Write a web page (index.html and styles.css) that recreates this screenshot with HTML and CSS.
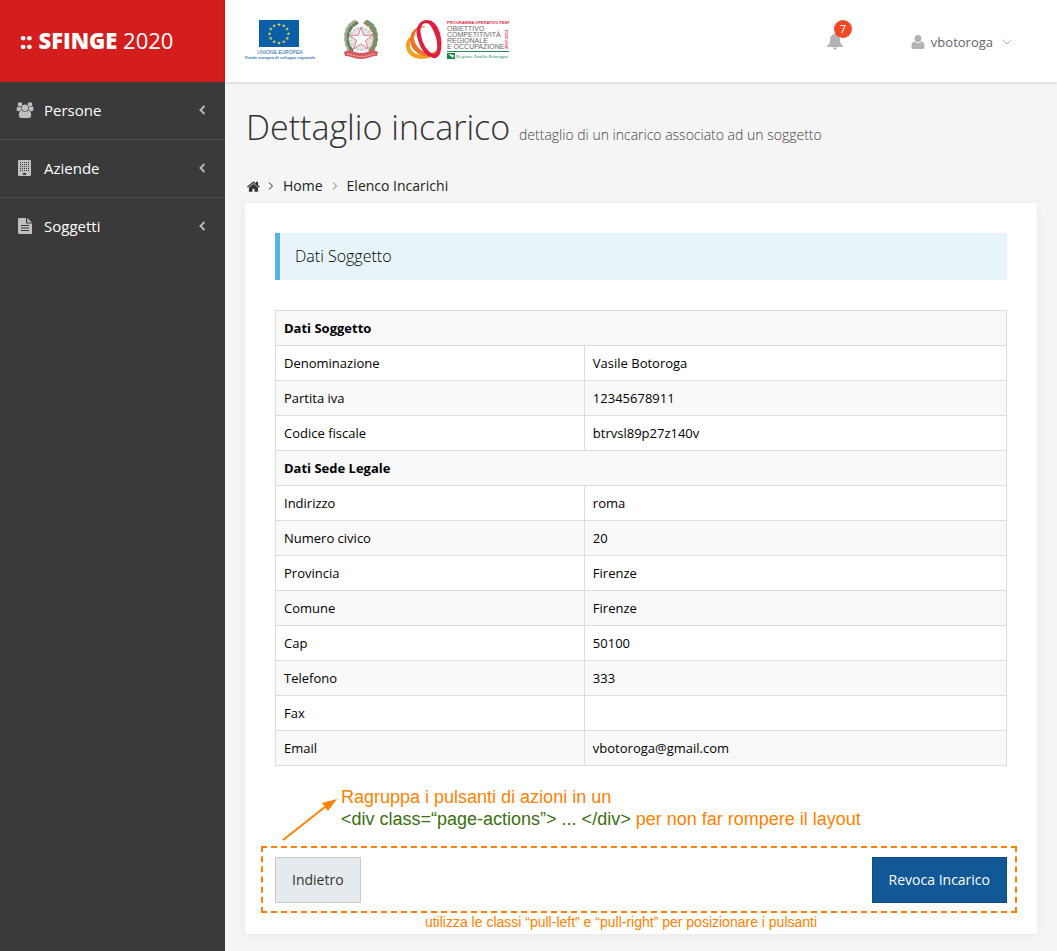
FILE: index.html
```html
<!DOCTYPE html>
<html lang="it">
<head>
<meta charset="utf-8">
<meta name="viewport" content="width=device-width, initial-scale=1">
<title>Sfinge 2020 - Dettaglio incarico</title>
<link rel="stylesheet" href="styles.css">
</head>
<body>
<div class="layout">
  <aside class="sidebar">
    <a class="brand" href="#"><b>:: SFINGE</b> 2020</a>
    <nav class="menu">
      <a class="menu-item" href="#">
        <svg class="menu-icon" viewBox="0 0 2048 1792"><path d="M657 896q-162 5-265 128h-134q-82 0-138-40.500t-56-118.500q0-353 124-353 6 0 43.500 21t97.500 42.500 119 21.500q67 0 133-23-5 37-5 66 0 159 90 287zm1071 637q0 120-73 189.500t-194 69.500h-874q-121 0-194-69.500t-73-189.500q0-53 3.500-103.500t14-109 26.500-108.500 43-97.500 62-81 85.500-53.500 111.500-20q10 0 43 21.500t73 48 107 48 135 21.500 135-21.500 107-48 73-48 43-21.500q61 0 111.500 20t85.500 53.500 62 81 43 97.500 26.500 108.500 14 109 3.500 103.500zm-1024-1277q0 106-75 181t-181 75-181-75-75-181 75-181 181-75 181 75 75 181zm704 384q0 159-112.500 271.500t-271.500 112.500-271.500-112.500-112.500-271.500 112.500-271.500 271.500-112.500 271.500 112.500 112.500 271.500zm576 225q0 78-56 118.500t-138 40.500h-134q-103-123-265-128 90-128 90-287 0-29-5-66 66 23 133 23 59 0 119-21.500t97.500-42.500 43.500-21q124 0 124 353zm-128-609q0 106-75 181t-181 75-181-75-75-181 75-181 181-75 181 75 75 181z"/></svg>
        <span class="menu-label">Persone</span>
        <svg class="menu-arrow" viewBox="0 0 8 12"><path d="M6.500 2 2.500 6l4 4"/></svg>
      </a>
      <a class="menu-item" href="#">
        <svg class="menu-icon" viewBox="0 0 18 18"><path fill-rule="evenodd" d="M3 1h11q1 0 1 1v14q0 1-1 1H3q-1 0-1-1V2q0-1 1-1zm4 13v2h3v-2z"/><path class="windows" d="M4.500 3v9.500M6.500 3v9.500M8.500 3v9.500M10.500 3v9.500M12.500 3v9.500"/></svg>
        <span class="menu-label">Aziende</span>
        <svg class="menu-arrow" viewBox="0 0 8 12"><path d="M6.500 2 2.500 6l4 4"/></svg>
      </a>
      <a class="menu-item" href="#">
        <svg class="menu-icon" viewBox="0 0 18 18"><path d="M3 1h7v5.500h6V16q0 1-1 1H3q-1 0-1-1V2q0-1 1-1z"/><path d="M11.200 1 16 5.500h-4.800z"/><path class="lines" d="M5 8.500h8M5 11h8M5 13.500h8"/></svg>
        <span class="menu-label">Soggetti</span>
        <svg class="menu-arrow" viewBox="0 0 8 12"><path d="M6.500 2 2.500 6l4 4"/></svg>
      </a>
    </nav>
  </aside>

  <div class="page">
    <header class="topbar">
      <div class="logos">
        <svg class="logo-eu" viewBox="0 0 72 42" role="img" aria-label="Unione Europea">
          <defs><path id="star" d="M0-1.800.5-.5 1.800-.5.800.4 1.100 1.600 0 .8-1.100 1.600-.8.400-1.800-.5-.5-.5z"/></defs>
          <rect x="14" y="0" width="40" height="27" fill="#0b5fa9"/>
          <g fill="#f5e13a">
            <use href="#star" x="34" y="4.500"/><use href="#star" x="38.800" y="5.700"/><use href="#star" x="42.200" y="9"/><use href="#star" x="43.500" y="13.700"/><use href="#star" x="42.200" y="18.300"/><use href="#star" x="38.800" y="21.700"/><use href="#star" x="34" y="23"/><use href="#star" x="29.200" y="21.700"/><use href="#star" x="25.800" y="18.300"/><use href="#star" x="24.500" y="13.700"/><use href="#star" x="25.800" y="9"/><use href="#star" x="29.200" y="5.700"/>
          </g>
          <text x="35" y="34" text-anchor="middle" class="eu-name">UNIONE EUROPEA</text>
          <text x="35" y="39" text-anchor="middle" class="eu-fund">Fondo europeo di sviluppo regionale</text>
        </svg>
        <svg class="logo-italy" viewBox="0 0 36 40" role="img" aria-label="Repubblica Italiana">
          <g fill="none" stroke-linecap="round">
            <path d="M12 2Q3 6 3 18q0 8 5 13" stroke="#a5ab8e" stroke-width="4" stroke-dasharray="2 3"/>
            <path d="M14 3Q5 8 5 18q0 8 4 12" stroke="#5d8061" stroke-width="3" stroke-dasharray="4 3"/>
            <path d="M24 2q9 4 9 16 0 8-5 13" stroke="#6d9470" stroke-width="4" stroke-dasharray="2 3"/>
            <path d="M22 3q9 5 9 15 0 8-4 12" stroke="#96885d" stroke-width="3" stroke-dasharray="4 3"/>
          </g>
          <circle cx="18" cy="19" r="12" fill="#e4e4e4"/>
          <circle cx="18" cy="19" r="11" fill="none" stroke="#c4c4c4" stroke-width="3" stroke-dasharray="1 3"/>
          <path d="m18 7 2.700 8.300h8.800l-7 5.200 2.700 8.500-7.200-5.200-7.200 5.200 2.700-8.500-7-5.200h8.800z" fill="#fff" stroke="#e07d84" stroke-width="1"/>
          <path d="M1 32q4-3 8-1 9 4 18 0 4-2 8 1l-1 4q-4 0-6 1-10 4-20 0-2-1-6-1z" fill="#d65a62"/>
          <path d="M4 34q3 0 5 1 9 3 18 0 2-1 5-1" fill="none" stroke="#f4c6c8" stroke-width="1" stroke-dasharray="2 1"/>
        </svg>
        <svg class="logo-por" viewBox="0 0 104 42" role="img" aria-label="Programma operativo FESR">
          <g fill-rule="evenodd">
            <path fill="#f2a024" d="M12 14Q0 17 1 27q2 11 15 12 13 0 14-7-5 4-12 3Q5 34 5 25q0-7 7-11z"/>
            <path fill="#ec7426" d="M17 6Q6 8 5 19q0 10 9 15 9 5 17 1 5-4 3-10-2 8-9 8-8 0-13-7-6-9 0-16 3-3 10-3z"/>
            <path fill="#df1e40" d="M22 0q9 0 13 13 3 12 0 21-3 5-7 4-10-3-14-15Q9 10 14 4q3-4 8-4zm-2 3q-6 2-4 12 2 12 10 18 5 3 6-3 1-9-3-18-4-10-9-9z"/>
          </g>
          <text x="42" y="4" class="por-title">PROGRAMMA OPERATIVO FESR</text>
          <g class="por-text"><text x="42" y="11">OBIETTIVO</text><text x="42" y="17">COMPETITIVITÀ</text><text x="42" y="23">REGIONALE</text><text x="42" y="29">E OCCUPAZIONE</text></g>
          <text class="por-title" transform="translate(103 29) rotate(-90)">2007-2013</text>
          <rect x="42" y="31" width="62" height="1" fill="#238b59"/>
          <rect x="42" y="33" width="8" height="6" fill="#14834c"/><path d="m43 34 6 1-1 3z" fill="#fff"/>
          <text x="51" y="38" class="por-region">Regione Emilia Romagna</text>
        </svg>
      </div>
      <button class="bell" type="button" aria-label="Notifiche">
        <svg viewBox="0 0 18 18"><path d="M9 1q1.200 0 1.200 1.300Q14 3.300 14 8q0 4 3 6v1H1v-1q3-2 3-6 0-4.700 3.800-5.700Q7.800 1 9 1zM7 15.500h4Q11 17.500 9 17.500T7 15.500z"/></svg>
        <span class="badge">7</span>
      </button>
      <button class="user" type="button">
        <svg class="user-icon" viewBox="0 0 14 14"><circle cx="7" cy="3.500" r="3.500"/><path d="M3.500 6.500Q7 9.500 10.500 6.500 13.500 7 13.500 11.500 13.500 14 11.500 14h-9Q.5 14 .5 11.500.5 7 3.500 6.500z"/></svg>
        <span>vbotoroga</span>
        <svg class="user-arrow" viewBox="0 0 10 6"><path d="m.7.7 4.300 4.300L9.300.7"/></svg>
      </button>
    </header>

    <main class="content">
      <h1 class="title">Dettaglio incarico <small>dettaglio di un incarico associato ad un soggetto</small></h1>
      <nav class="breadcrumb">
        <svg class="home-icon" viewBox="80 200 1640 1340"><path d="M1472 992v480q0 26-19 45t-45 19h-384v-384h-256v384h-384q-26 0-45-19t-19-45v-480q0-1 .5-3t.5-3l575-474 575 474q1 2 1 6zm223-69l-62 74q-8 9-21 11h-3q-13 0-21-7l-692-577-692 577q-12 8-24 7-13-2-21-11l-62-74q-8-10-7-23.500t11-21.500l719-599q32-26 76-26t76 26l244 204v-195q0-14 9-23t23-9h192q14 0 23 9t9 23v408l219 182q10 8 11 21.500t-7 23.500z"/></svg>
        <svg class="crumb-arrow" viewBox="0 0 6 8"><path d="m1 .5 3.500 3.500L1 7.500"/></svg>
        <a href="#">Home</a>
        <svg class="crumb-arrow light" viewBox="0 0 6 8"><path d="m1 .5 3.500 3.500L1 7.500"/></svg>
        <a href="#">Elenco Incarichi</a>
      </nav>

      <section class="card">
        <h2 class="note">Dati Soggetto</h2>
        <table class="details">
          <colgroup><col class="col-label"><col></colgroup>
          <tbody>
            <tr><th colspan="2">Dati Soggetto</th></tr>
            <tr><td>Denominazione</td><td>Vasile Botoroga</td></tr>
            <tr><td>Partita iva</td><td>12345678911</td></tr>
            <tr><td>Codice fiscale</td><td>btrvsl89p27z140v</td></tr>
            <tr><th colspan="2">Dati Sede Legale</th></tr>
            <tr><td>Indirizzo</td><td>roma</td></tr>
            <tr><td>Numero civico</td><td>20</td></tr>
            <tr><td>Provincia</td><td>Firenze</td></tr>
            <tr><td>Comune</td><td>Firenze</td></tr>
            <tr><td>Cap</td><td>50100</td></tr>
            <tr><td>Telefono</td><td>333</td></tr>
            <tr><td>Fax</td><td></td></tr>
            <tr><td>Email</td><td>vbotoroga@gmail.com</td></tr>
          </tbody>
        </table>
        <div class="hint">
          <svg class="hint-arrow" viewBox="0 0 58 46"><path d="M1 44 43 11" fill="none" stroke="#ff7f00" stroke-width="2"/><path d="M55 3 46 15 43 11 40 7z" fill="#ff7f00"/></svg>
          <p>Ragruppa i pulsanti di azioni in un<br><code>&lt;div class=“page-actions”&gt; ... &lt;/div&gt;</code> per non far rompere il layout</p>
        </div>
        <div class="page-actions">
          <button class="btn btn-default" type="button">Indietro</button>
          <button class="btn btn-primary" type="button">Revoca Incarico</button>
        </div>
        <p class="hint-small">utilizza le classi “pull-left” e “pull-right” per posizionare i pulsanti</p>
      </section>
    </main>
  </div>
</div>
</body>
</html>
```

FILE: styles.css
```css
* { box-sizing: border-box; }

body {
  margin: 0;
  background: #f5f5f5;
  color: #000;
  font: 13px/20px "Open Sans", sans-serif;
}

a { color: inherit; text-decoration: none; }
svg { display: block; flex: none; }
button { font: inherit; cursor: pointer; }

.layout { display: flex; min-height: 100vh; }

/* Sidebar */
.sidebar { flex: 0 0 225px; background: #3a3a3a; color: #fff; }
.brand {
  display: block;
  height: 82px;
  padding: 0 20px;
  background: #d41e1e;
  font-size: 22px;
  line-height: 80px;
}
.brand b { font-weight: 800; }
.menu-item {
  display: flex;
  align-items: center;
  height: 58px;
  padding: 0 19px 2px 16px;
  border-bottom: 1px solid #4d4d4d;
  font-size: 15px;
}
.menu-item:last-child { border-bottom: 0; }
.menu-icon { width: 18px; height: 18px; margin-right: 10px; fill: #bfbfbf; }
.menu-icon .windows { stroke: #3a3a3a; stroke-width: 1; stroke-dasharray: 1 1; }
.menu-icon .lines { stroke: #3a3a3a; stroke-width: 1; }
.menu-label { flex: 1; }
.menu-arrow { width: 8px; height: 12px; fill: none; stroke: #b5b5b5; stroke-width: 2; }

/* Top bar */
.page { flex: 1; min-width: 0; }
.topbar {
  display: flex;
  align-items: center;
  height: 82px;
  padding: 0 45px 0 20px;
  background: #fff;
  box-shadow: 0 1px 3px rgba(0, 0, 0, .15);
}
.logos { display: flex; flex: 1; gap: 26px; }
.logo-eu { width: 72px; height: 42px; }
.logo-italy { width: 36px; height: 40px; }
.logo-por { width: 104px; height: 42px; }
.logos text { font-family: "Liberation Sans", sans-serif; }
.logos .eu-name { font-size: 5px; fill: #1765a9; }
.logos .eu-fund { font-size: 4px; font-weight: bold; fill: #3b7db8; }
.logos .por-title { font-size: 4px; font-weight: bold; fill: #e0284a; }
.logos .por-text { font-size: 7px; fill: #666; }
.logos .por-region { font: 5px "Liberation Serif", serif; fill: #238b59; }

.bell, .user { padding: 0; border: 0; background: none; }
.bell { position: relative; margin-right: 67px; }
.bell svg { width: 18px; height: 18px; fill: #b3b3b3; }
.badge {
  position: absolute;
  top: -12px;
  right: -8px;
  width: 18px;
  height: 18px;
  border-radius: 50%;
  background: #f04a25;
  color: #fff;
  font-size: 11px;
  line-height: 18px;
}
.user { display: flex; align-items: center; padding-top: 2px; color: #666; }
.user-icon { width: 14px; height: 14px; margin-right: 6px; fill: #b3b3b3; }
.user-arrow { width: 10px; height: 6px; margin-left: 9px; fill: none; stroke: #b3b3b3; }

/* Content */
.content { padding: 20px 20px 17px; }
.title {
  margin: 0;
  padding-left: 1px;
  color: #333;
  font-size: 34px;
  font-weight: 300;
  line-height: 50px;
}
.title small { color: #444; font-size: 14px; }
.breadcrumb {
  display: flex;
  align-items: center;
  padding: 24px 2px 7px;
  margin-top: -8px;
  color: #222;
  font-size: 14px;
}
.home-icon { width: 13px; height: 11px; margin-right: 8px; fill: #333; }
.crumb-arrow { width: 6px; height: 8px; margin-right: 9px; fill: none; stroke: #222; stroke-width: 1; }
.crumb-arrow.light { margin-left: 9px; stroke: #777; }

.card {
  padding: 30px 30px 3px;
  border-radius: 3px;
  background: #fff;
  box-shadow: 0 1px 10px rgba(0, 0, 0, .06);
}
.note {
  margin: 0 0 30px;
  padding: 13px 15px 14px;
  border-left: 5px solid #57b5e3;
  background: #e7f5fb;
  font-size: 16px;
  font-weight: 300;
  line-height: 20px;
}
.details { width: 100%; border-collapse: collapse; table-layout: fixed; }
.col-label { width: 42.25%; }
.details th, .details td {
  height: 35px;
  padding: 7px 8px;
  border: 1px solid #ddd;
  text-align: left;
}
.details tr:nth-child(odd) { background: #f9f9f9; }
.details th { font-weight: 700; }

/* Annotations */
.hint, .hint-small { color: #ff7f00; font-family: "Liberation Sans", sans-serif; }
.hint {
  display: flex;
  gap: 1px;
  margin-bottom: 4px;
  padding: 20px 0 0 7px;
  font-size: 18px;
  line-height: 22px;
}
.hint p, .hint-small { margin: 0; }
.hint-arrow { width: 58px; height: 46px; margin-top: 10px; }
.hint code { color: #39700d; font: inherit; }
.hint-small { padding-right: 40px; font-size: 14px; line-height: 18px; text-align: center; }

.page-actions {
  display: flex;
  justify-content: space-between;
  margin: 0 -10px 0 -14px;
  padding: 9px 8px 8px 12px;
  border: 2px dashed #ff7f00;
}
.btn { padding: 12px 16px; border: 1px solid; font-size: 14px; line-height: 20px; }
.btn-default { border-color: #c6cacc; background: #e5eaee; color: #333; }
.btn-primary { border-color: #0d4a80; background: #105896; color: #fff; font-weight: 500; }
```
